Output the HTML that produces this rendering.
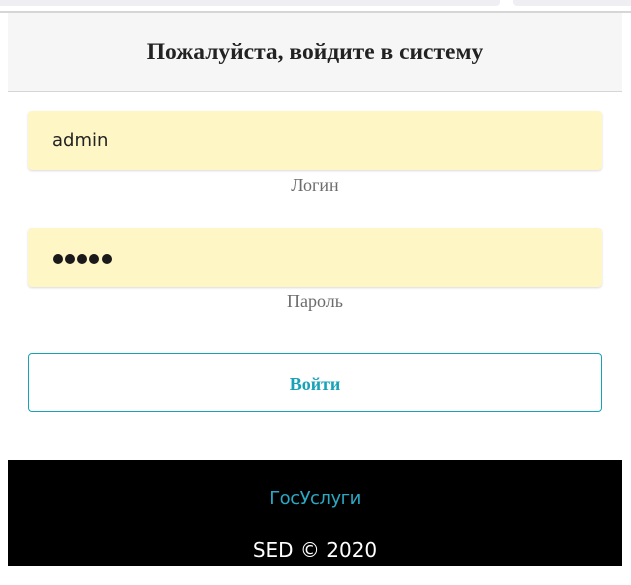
<!DOCTYPE html>
<html><head><meta charset="utf-8"><style>
body{margin:0;background:#fff;width:631px;height:585px;position:relative;overflow:hidden;font-family:"Liberation Serif",serif}
.a{position:absolute}
.d{position:absolute;top:254px;width:10px;height:10px;border-radius:50%;background:#1a1a1a}
</style></head><body>
<div class="a" style="left:0;top:0;width:500px;height:6px;background:#efeff3;border-radius:0 0 4px 0"></div>
<div class="a" style="left:513px;top:0;width:118px;height:6px;background:#efeff3;border-radius:0 0 0 4px"></div>
<div class="a" style="left:0;top:11px;width:631px;height:2px;background:#d6d6d6"></div>
<div class="a" style="left:8px;top:13px;width:614px;height:78px;background:#f6f6f6;border-bottom:1px solid #d6d6d6;text-align:center;line-height:78px;font-weight:bold;font-size:23.5px;color:#222">Пожалуйста, войдите в систему</div>
<div class="a" style="left:28px;top:111px;width:574px;height:59px;background:#fff6c6;border-radius:4px;box-shadow:0 1px 2px rgba(0,0,0,.15);font-family:'DejaVu Sans',sans-serif;font-size:18px;line-height:60px;color:#222;text-indent:24px">admin</div>
<div class="a" style="left:28px;top:175px;width:574px;text-align:center;font-size:18px;color:#6c6c6c">Логин</div>
<div class="a" style="left:28px;top:228px;width:574px;height:59px;background:#fff6c6;border-radius:4px;box-shadow:0 1px 2px rgba(0,0,0,.15)"></div>
<div class="d" style="left:53px"></div><div class="d" style="left:65px"></div><div class="d" style="left:77px"></div><div class="d" style="left:89px"></div><div class="d" style="left:102px"></div>
<div class="a" style="left:28px;top:291px;width:574px;text-align:center;font-size:18px;color:#6c6c6c">Пароль</div>
<div class="a" style="left:28px;top:353px;width:572px;height:57px;border:1px solid #17a2b8;border-radius:4px;text-align:center;line-height:60px;font-weight:bold;font-size:18px;color:#17a2b8">Войти</div>
<div class="a" style="left:8px;top:460px;width:614px;height:106px;background:#000;text-align:center;font-family:'DejaVu Sans',sans-serif">
<div style="position:absolute;top:28px;width:100%;color:#2aa8c4;font-size:18px;letter-spacing:-0.5px">ГосУслуги</div>
<div style="position:absolute;top:78px;width:100%;color:#fff;font-size:20px">SED © 2020</div>
</div>
</body></html>
